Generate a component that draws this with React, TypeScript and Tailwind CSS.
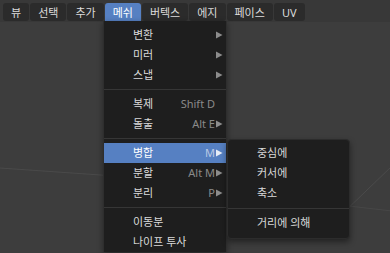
import { ReactNode } from 'react';

const font = { fontFamily: '"Noto Sans", "Noto Sans CJK KR", sans-serif' };

const tabs = ['뷰', '선택', '추가', '메쉬', '버텍스', '에지', '페이스', 'UV'];

type Item = { label: string; shortcut?: string; sub?: boolean; active?: boolean } | 'sep';

const menuItems: Item[] = [
  { label: '변환', sub: true },
  { label: '미러', sub: true },
  { label: '스냅', sub: true },
  'sep',
  { label: '복제', shortcut: 'Shift D' },
  { label: '돌출', shortcut: 'Alt E', sub: true },
  'sep',
  { label: '병합', shortcut: 'M', sub: true, active: true },
  { label: '분할', shortcut: 'Alt M', sub: true },
  { label: '분리', shortcut: 'P', sub: true },
  'sep',
  { label: '이동분' },
  { label: '나이프 투사' },
];

const mergeItems: Item[] = [
  { label: '중심에' },
  { label: '커서에' },
  { label: '축소' },
  'sep',
  { label: '거리에 의해' },
];

const Arrow = ({ active }: { active?: boolean }) => (
  <svg width="7" height="8" viewBox="0 0 7 8" className="ml-[1px]">
    <path d="M0 0.5 L6.5 4 L0 7.5 Z" fill={active ? '#e6ecf6' : '#8c8c8c'} />
  </svg>
);

const Row = ({ item, indent }: { item: Exclude<Item, 'sep'>; indent: string }): ReactNode => (
  <div
    className={`flex h-[20px] items-center pr-[3px] ${indent} ${
      item.active ? 'bg-[#5680c2] text-white' : 'text-[#dadada]'
    }`}
  >
    <span className="flex-1 whitespace-nowrap">{item.label}</span>
    {item.shortcut && (
      <span className={item.active ? 'text-[#b9c9e4]' : 'text-[#8a8a8a]'}>{item.shortcut}</span>
    )}
    {item.sub ? <Arrow active={item.active} /> : <span className="w-[8px]" />}
  </div>
);

const Sep = ({ h }: { h: string }) => (
  <div className={`flex ${h} items-center`}>
    <div className="h-px w-full bg-[#363636]" />
  </div>
);

export default function App() {
  return (
    <div className="relative h-[253px] w-[390px] overflow-hidden bg-[#3d3d3d] text-[11px]" style={font}>
      {/* viewport grid lines */}
      <svg className="absolute inset-0" width="390" height="253">
        <line x1="0" y1="168" x2="230" y2="184" stroke="#4a4a4a" strokeWidth="1" />
        <line x1="340" y1="216" x2="392" y2="166" stroke="#4b4b4b" strokeWidth="1" />
        <line x1="340" y1="205" x2="392" y2="211" stroke="#474747" strokeWidth="1" />
      </svg>

      {/* header */}
      <div className="relative flex h-[22px] items-start gap-px bg-[#383838] pl-[3px] pt-[3px]">
        {tabs.map((t) => (
          <div
            key={t}
            className={`flex h-[18px] items-center px-[8px] leading-none ${
              t === '메쉬'
                ? 'h-[19px] rounded-t-[3px] bg-[#5680c2] text-white'
                : 'rounded-[3px] bg-[#2b2b2b] text-[#dcdcdc]'
            }`}
          >
            {t}
          </div>
        ))}
      </div>

      {/* mesh menu */}
      <div className="absolute left-[103px] top-[21px] w-[124px] border-x border-[#2e2e2e] bg-[#1e1e1e] pt-[4px] shadow-[0_2px_6px_rgba(0,0,0,0.4)]">
        {menuItems.map((it, i) =>
          it === 'sep' ? <Sep key={i} h="h-[9px]" /> : <Row key={i} item={it} indent="pl-[29px]" />
        )}
      </div>

      {/* merge submenu */}
      <div className="absolute left-[227px] top-[139px] w-[123px] rounded-[4px] border border-[#2c2c2c] bg-[#1e1e1e] pb-[5px] pt-[3px] shadow-[0_3px_6px_rgba(0,0,0,0.45)]">
        {mergeItems.map((it, i) =>
          it === 'sep' ? <Sep key={i} h="h-[10px]" /> : <Row key={i} item={it} indent="pl-[29px]" />
        )}
      </div>
    </div>
  );
}
